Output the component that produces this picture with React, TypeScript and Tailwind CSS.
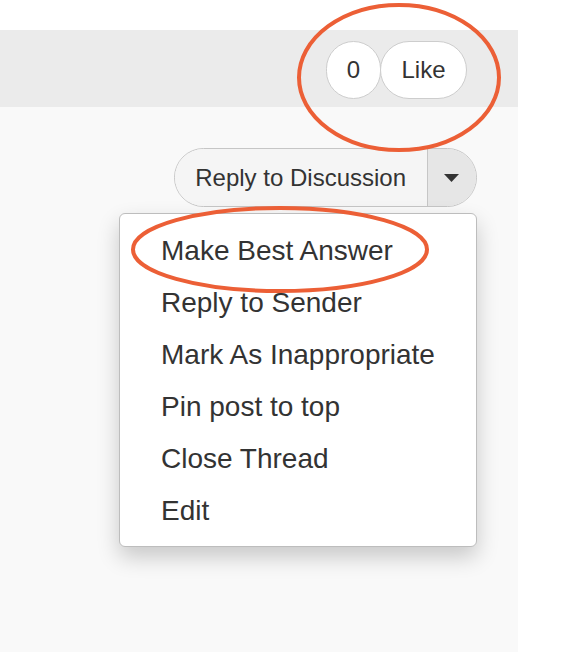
import React from "react";

const items = [
  "Make Best Answer",
  "Reply to Sender",
  "Mark As Inappropriate",
  "Pin post to top",
  "Close Thread",
  "Edit",
];

export default function App() {
  return (
    <div
      className="relative w-[582px] h-[652px] bg-white overflow-hidden text-[#333]"
      style={{ fontFamily: '"Liberation Sans", Arial, Helvetica, sans-serif' }}
    >
      <div className="flex flex-col w-[518px] h-full pt-[30px]">
        {/* gray bar */}
        <div className="h-[77px] bg-[#ebebeb] flex justify-end items-start pt-[11px] pr-[51px]">
          <div className="flex items-center">
            <button className="h-[58px] w-[55px] rounded-full bg-white border-[1.5px] border-[#cdcdcd] text-[24px] leading-none flex items-center justify-center">
              0
            </button>
            <button className="relative -ml-[1px] h-[58px] w-[87px] rounded-full bg-white border-[1.5px] border-[#cdcdcd] text-[24px] leading-none flex items-center justify-center">
              Like
            </button>
          </div>
        </div>
        {/* content area */}
        <div className="flex-1 bg-[#f9f9f9] flex justify-end items-start pt-[41px] pr-[41px]">
          <div className="relative">
            <div className="flex h-[59px] rounded-full border-[1.5px] border-[#c6c6c6] overflow-hidden">
              <div className="flex items-center pl-[20px] pr-[21px] bg-[#f5f5f5] text-[24px] leading-none">
                Reply to Discussion
              </div>
              <div className="w-[49px] flex items-center justify-center bg-[#e6e6e6] border-l-[1.5px] border-[#c6c6c6] pr-[2px]">
                <svg width="15" height="8" viewBox="0 0 15 8">
                  <polygon points="0,0 15,0 7.5,8" fill="#333" />
                </svg>
              </div>
            </div>
            <div className="absolute right-0 top-full mt-[6px] w-[358px] bg-white border border-[#bdbdbd] rounded-[6px] shadow-[0_10px_22px_rgba(0,0,0,0.2)] pt-[11px] pb-[9px]">
              {items.map((t) => (
                <div
                  key={t}
                  className="h-[52px] leading-[52px] text-[28px] pl-[41px] whitespace-nowrap"
                >
                  {t}
                </div>
              ))}
            </div>
          </div>
        </div>
      </div>

      {/* annotation ellipses */}
      <svg
        className="absolute inset-0 pointer-events-none"
        width="582"
        height="652"
        viewBox="0 0 582 652"
      >
        <ellipse
          cx="399"
          cy="77.5"
          rx="100"
          ry="72.5"
          fill="none"
          stroke="#ec5f36"
          strokeWidth="4"
        />
        <ellipse
          cx="280"
          cy="249.5"
          rx="147"
          ry="41.5"
          fill="none"
          stroke="#ec5f36"
          strokeWidth="4"
        />
      </svg>
    </div>
  );
}
